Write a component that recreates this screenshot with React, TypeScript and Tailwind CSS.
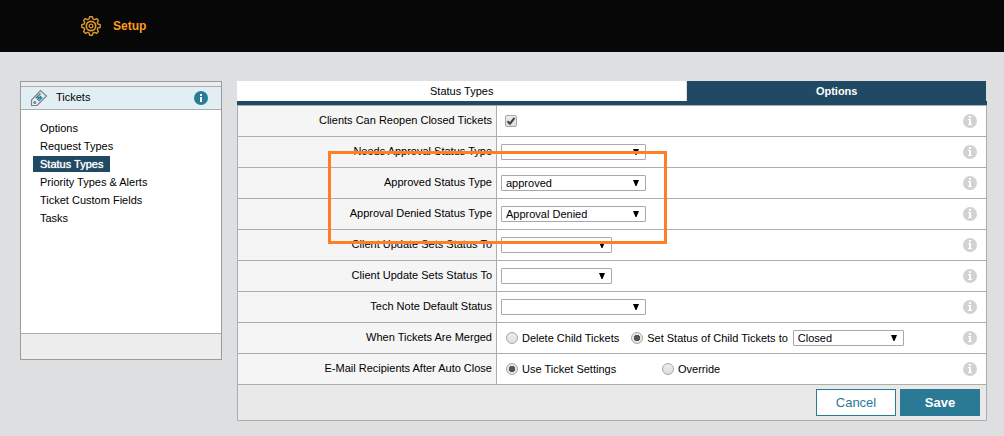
import React, { useId, useState } from "react";

function InfoIcon({ className }: { className: string }) {
  return (
    <svg viewBox="0 0 14 14" className={"h-[14px] w-[14px] " + className} aria-hidden="true">
      <circle cx="7" cy="7" r="7" fill="currentColor" />
      <path d="M6 2h2v2H6zM5 5h3v5h1v1H5v-1h1V6H5z" fill="#fff" />
    </svg>
  );
}

function PanelInfoIcon() {
  return (
    <svg viewBox="0 0 14 14" className="h-[14px] w-[14px]" aria-hidden="true">
      <circle cx="7" cy="7" r="7" fill="#277c99" />
      <path d="M6 3h2v2H6zM6 6h2v5H6z" fill="#fff" />
    </svg>
  );
}

function GearIcon() {
  return (
    <svg viewBox="0 0 20 20" className="h-5 w-5" fill="none" stroke="#dc9a30" aria-hidden="true">
      <path
        strokeWidth="1.4"
        strokeLinejoin="round"
        d="M8 3.100 8.700.8h2.600l.7 2.300 1.500.6 2.100-1.100 1.800 1.800-1.100 2.100.6 1.500 2.300.7v2.600l-2.300.7-.6 1.500 1.100 2.100-1.800 1.800-2.100-1.100-1.500.6-.7 2.300H8.700L8 16.900l-1.500-.6-2.100 1.100-1.800-1.800 1.100-2.100-.6-1.500-2.300-.7V8.700L3.100 8l.6-1.500-1.100-2.100 1.800-1.800 2.100 1.100z"
      />
      <circle cx="10" cy="10" r="4.7" strokeWidth="1.7" />
      <circle cx="10" cy="10" r="1.900" strokeWidth="1.200" />
    </svg>
  );
}

function TicketIcon() {
  return (
    <svg viewBox="0 0 18 18" className="h-[18px] w-[18px]" fill="none" aria-hidden="true">
      <path d="M1.500 16.500v-5.500L10.500 1.500l6 5.500-9.500 9.500z" stroke="#808285" strokeWidth="1.200" />
      <circle cx="4.800" cy="13.600" r="1.500" fill="#808285" />
      <path d="M10.500 4.500 5.800 9.200M11 7l-3.800 3.800M12.300 8.300 8.500 12.100M7.800 7.800l1.500 2.200M9.500 8l1.500 1.200" stroke="#277c99" strokeWidth="1.300" />
    </svg>
  );
}

function Select({ id, label, wide, value, options }: { id?: string; label?: string; wide?: boolean; value: string; options: string[] }) {
  return (
    <span className={"relative block shrink-0 " + (wide ? "w-[145px]" : "w-[111px]")}>
      <select
        id={id}
        aria-label={label}
        defaultValue={value}
        className="block h-4 w-full appearance-none rounded-[1px] border border-[#a9a9a9] bg-white pr-4 pl-1 text-[11px] leading-[14px] text-black"
      >
        {options.map((o) => (
          <option key={o} value={o}>{o}</option>
        ))}
      </select>
      <svg viewBox="0 0 6 6" className="pointer-events-none absolute top-[5px] right-[7px] h-[6px] w-[6px]" aria-hidden="true">
        <path d="M0 0h6L3.500 6h-1z" fill="#000" />
      </svg>
    </span>
  );
}

function Radio({ name, checked, children }: { name: string; checked?: boolean; children: string }) {
  return (
    <label className="flex items-center gap-1">
      <input
        type="radio"
        name={name}
        defaultChecked={checked}
        className="m-0 h-3 w-3 appearance-none rounded-full border border-[#a6a6a6] bg-linear-to-b from-[#eeeeee] to-[#dedede] checked:bg-[radial-gradient(circle,#555_0_3px,#e6e6e6_3px)]"
      />
      {children}
    </label>
  );
}

function Row({ label, htmlFor, children }: { label: string; htmlFor?: string; children: React.ReactNode }) {
  return (
    <div className="flex h-[31px] border-b border-[#adadad]">
      <div className="flex w-[259px] shrink-0 items-center justify-end border-r border-[#adadad] bg-[#f5f5f5] pr-1 pb-[2px]">
        {htmlFor ? <label htmlFor={htmlFor}>{label}</label> : <span>{label}</span>}
      </div>
      <div className="flex flex-1 items-center bg-white pl-1">{children}</div>
      <div className="flex items-center bg-white pr-[9px]">
        <button type="button" aria-label={"Help: " + label}>
          <InfoIcon className="text-[#d2d2d2]" />
        </button>
      </div>
    </div>
  );
}

const statuses = ["", "Open", "approved", "Approval Denied", "Closed"];

const selectRows = [
  { label: "Needs Approval Status Type", value: "", wide: true },
  { label: "Approved Status Type", value: "approved", wide: true },
  { label: "Approval Denied Status Type", value: "Approval Denied", wide: true },
  { label: "Client Update Sets Status To", value: "", wide: false },
  { label: "Client Update Sets Status To", value: "", wide: false },
  { label: "Tech Note Default Status", value: "", wide: true },
];

const links = ["Options", "Request Types", "Status Types", "Priority Types & Alerts", "Ticket Custom Fields", "Tasks"];

function Sidebar() {
  return (
    <aside className="w-[202px] shrink-0 border border-[#999b9d] bg-white">
      <div className="h-[5px] border-b border-[#adadad] bg-[#ededed]" />
      <div className="flex h-[23px] items-center border-b border-[#adadad] bg-[#e1eff5] pr-[13px] pl-[9px]">
        <TicketIcon />
        <h2 className="flex-1 pb-[2px] pl-2">Tickets</h2>
        <button type="button" aria-label="About tickets">
          <PanelInfoIcon />
        </button>
      </div>
      <nav className="flex min-h-[223px] flex-col items-start gap-[2px] px-3 py-[10px]">
        {links.map((l) => (
          <a
            key={l}
            href="#"
            className={
              "px-[7px] " + (l === "Status Types" ? "bg-[#204a63] text-white [text-shadow:0_0_1px_#fff]" : "")
            }
          >
            {l}
          </a>
        ))}
      </nav>
      <div className="h-[26px] border-t border-[#adadad] bg-[#ededed]" />
    </aside>
  );
}

export default function App() {
  const base = useId();
  const [reopen, setReopen] = useState(true);
  return (
    <div className="min-h-screen bg-[#dedfe1] font-['Liberation_Sans',Arial,sans-serif] text-[11px] leading-4 text-black">
      <header className="flex h-[52px] items-center gap-3 bg-[#070707] pl-[81px]">
        <GearIcon />
        <h1 className="text-[12px] font-bold text-[#ff9a1f]">Setup</h1>
      </header>
      <div className="flex items-start gap-[15px] pt-[29px] pr-[17px] pb-[15px] pl-5">
        <Sidebar />
        <main className="relative min-w-0 flex-1">
          <div className="flex h-5 border-r border-[#dedfe1] bg-[#204a63]" role="tablist">
            <button type="button" role="tab" aria-selected="false" className="box-content w-3/5 border-r border-[#dedfe1] bg-white">
              Status Types
            </button>
            <button type="button" role="tab" aria-selected="true" className="flex-1 font-bold text-white">
              Options
            </button>
          </div>
          <div className="h-1 bg-[#204a63]" />
          <form className="border border-[#adadad]" onSubmit={(e) => e.preventDefault()}>
            <Row label="Clients Can Reopen Closed Tickets" htmlFor={base + "reopen"}>
              <span className="relative ml-1 block h-3 w-3">
                <input
                  id={base + "reopen"}
                  type="checkbox"
                  checked={reopen}
                  onChange={(e) => setReopen(e.target.checked)}
                  className="block h-3 w-3 appearance-none rounded-[2px] border border-[#a6a6a6] bg-linear-to-b from-[#eeeeee] to-[#dedede]"
                />
                {reopen && (
                  <svg viewBox="0 0 12 12" className="pointer-events-none absolute inset-0 h-3 w-3" aria-hidden="true">
                    <path d="M2.500 6.200 5 8.700 9.500 2.800" fill="none" stroke="#444" strokeWidth="2.200" />
                  </svg>
                )}
              </span>
            </Row>
            {selectRows.map((r, i) => (
              <Row key={i} label={r.label} htmlFor={base + i}>
                <Select id={base + i} wide={r.wide} value={r.value} options={statuses} />
              </Row>
            ))}
            <Row label="When Tickets Are Merged">
              <div role="radiogroup" aria-label="When Tickets Are Merged" className="flex items-center gap-3 pl-[5px]">
                <Radio name="merged">Delete Child Tickets</Radio>
                <Radio name="merged" checked>Set Status of Child Tickets to</Radio>
              </div>
              <span className="pl-[5px]">
                <Select label="Child ticket status" value="Closed" options={statuses} />
              </span>
            </Row>
            <Row label="E-Mail Recipients After Auto Close">
              <div role="radiogroup" aria-label="E-Mail Recipients After Auto Close" className="grid grid-cols-[156px_auto] pl-[5px]">
                <Radio name="recipients" checked>Use Ticket Settings</Radio>
                <Radio name="recipients">Override</Radio>
              </div>
            </Row>
            <div className="flex h-[35px] items-center justify-end gap-1 bg-[#e9e9e9] pr-[6px]">
              <button type="button" className="h-[27px] w-20 border border-[#2a7a96] bg-white text-[13px] text-[#2a7a96]">
                Cancel
              </button>
              <button type="submit" className="h-[27px] w-20 bg-[#2a7a96] text-[13px] font-bold text-white">
                Save
              </button>
            </div>
          </form>
          <div className="pointer-events-none absolute top-[70px] left-[91px] h-[93px] w-[339px] border-3 border-[#ff7f27]" />
        </main>
      </div>
    </div>
  );
}
